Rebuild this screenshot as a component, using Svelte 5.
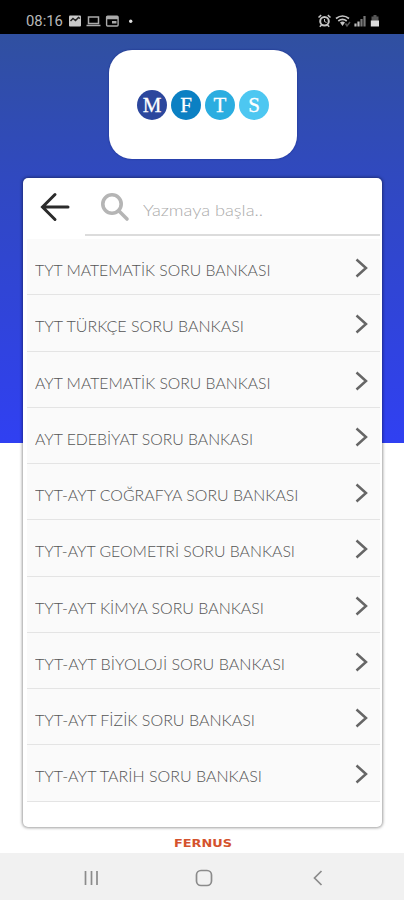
<script lang="ts">
  type Book = { title: string; width: number };

  const books: Book[] = [
    { title: 'TYT MATEMATİK SORU BANKASI', width: 235.5 },
    { title: 'TYT TÜRKÇE SORU BANKASI', width: 209 },
    { title: 'AYT MATEMATİK SORU BANKASI', width: 235.5 },
    { title: 'AYT EDEBİYAT SORU BANKASI', width: 218 },
    { title: 'TYT-AYT COĞRAFYA SORU BANKASI', width: 263.5 },
    { title: 'TYT-AYT GEOMETRİ SORU BANKASI', width: 260 },
    { title: 'TYT-AYT KİMYA SORU BANKASI', width: 229 },
    { title: 'TYT-AYT BİYOLOJİ SORU BANKASI', width: 250 },
    { title: 'TYT-AYT FİZİK SORU BANKASI', width: 220 },
    { title: 'TYT-AYT TARİH SORU BANKASI', width: 227 }
  ];

  const logo = [
    { letter: 'M', tone: 'navy' },
    { letter: 'F', tone: 'blue' },
    { letter: 'T', tone: 'sky' },
    { letter: 'S', tone: 'light' }
  ];
</script>

<div class="screen">
  <header class="status">
    <span class="clock">08:16</span>
    <svg class="notifications" width="68" height="14" viewBox="0 0 68 14">
      <rect x="2" y="1.500" width="12" height="11" rx="1" fill="#c9c9c9" />
      <path d="M3.500 7 6 4.500l2.500 2 3-3 1.500 1" fill="none" stroke="#222" stroke-width="1.500" />
      <path d="M21.500 3h10v6.500h-10zM19.500 11.500h14" fill="none" stroke="#aaa" stroke-width="1.500" />
      <rect x="39.600" y="2.200" width="11.500" height="9.800" rx="1" fill="none" stroke="#aaa" stroke-width="1.400" />
      <path d="M39.500 4h11.500M45 8.200h4.500" stroke="#aaa" stroke-width="2.400" />
      <circle cx="63.700" cy="7.200" r="1.700" fill="#ddd" />
    </svg>
    <svg class="signals" width="64" height="14" viewBox="0 0 64 14">
      <g fill="none" stroke="#c4c4c4">
        <circle cx="7.500" cy="7.200" r="4.300" stroke-width="2" />
        <path d="M1.500 3.500 4.200 1.200M13.500 3.500l-2.700-2.300M2.800 12.800l2-2M12.200 12.800l-2-2" stroke-width="1.600" />
        <path d="M7.500 5v2.500l2 1" stroke-width="1" />
        <path d="M19 4.500q6.500-5 13 0M21.300 7q4.200-3.200 8.400 0" stroke-width="1.700" />
      </g>
      <path d="m23 8.500 2.500 3.500L28 8.500q-2.500-1.800-5 0" fill="#c4c4c4" />
      <path d="m28.500 9.500 1.500 2.500 3-4" fill="none" stroke="#555" stroke-width="1.500" />
      <path d="M38.500 9.500v3M41.500 7.500v5" stroke="#bbb" stroke-width="2.200" />
      <path d="M44.500 5v7.500M47.500 2v10.500" stroke="#777" stroke-width="2.200" />
      <path d="M54.500 2.500h2V1h3v1.500h2V7h-7z" fill="#555" />
      <path d="M53.800 6.500H62v6h-8.200z" fill="#ddd" />
    </svg>
  </header>

  <main>
    <div class="logo">
      {#each logo as item}
        <span class="dot {item.tone}">{item.letter}</span>
      {/each}
    </div>

    <section class="panel">
      <div class="toolbar">
        <button class="back" aria-label="Geri">
          <svg width="30" height="30" viewBox="0 0 30 30">
            <path d="M28 15H3M15 2.500 2.500 15 15 27.500" />
          </svg>
        </button>
        <label class="search">
          <svg width="30" height="30" viewBox="0 0 30 30">
            <circle cx="12" cy="12" r="9.200" />
            <path d="m19 19 8 8" />
          </svg>
          <svg class="placeholder" width="125" height="24">
            <text x="0" y="18" textLength="120" lengthAdjust="spacingAndGlyphs">Yazmaya başla..</text>
          </svg>
        </label>
      </div>

      <ul>
        {#each books as book}
          <li>
            <svg class="title" width="300" height="24">
              <text x="0" y="18" textLength={book.width} lengthAdjust="spacingAndGlyphs">{book.title}</text>
            </svg>
            <svg class="chevron" width="13" height="20" viewBox="0 0 13 20">
              <path d="m1.500 1.500 9.500 8.500-9.500 8.500" />
            </svg>
          </li>
        {/each}
      </ul>
    </section>

    <footer>
      <svg width="60" height="12">
        <text x="1" y="9.500" textLength="58" lengthAdjust="spacingAndGlyphs">FERNUS</text>
      </svg>
    </footer>
  </main>

  <nav>
    <svg width="18" height="18" viewBox="0 0 18 18"><path d="M3.500 2v14M9.500 2v14M15 2v14" /></svg>
    <svg width="18" height="18" viewBox="0 0 18 18"><rect x="1.500" y="1.500" width="15" height="15" rx="4.500" /></svg>
    <svg width="18" height="18" viewBox="0 0 18 18"><path d="M12.500 2 5.500 9l7 7" /></svg>
  </nav>
</div>

<style>
  :global(body) {
    margin: 0;
    background: #fff;
  }
  .screen {
    display: flex;
    flex-direction: column;
    width: 404px;
    height: 900px;
    overflow: hidden;
    font-family: Lato, 'Open Sans', sans-serif;
  }
  svg {
    display: block;
    flex: none;
    fill: none;
  }

  .status {
    display: flex;
    align-items: center;
    height: 34px;
    padding: 8px 23px 0 26px;
    box-sizing: border-box;
    background: #000;
    flex: none;
  }
  .clock {
    width: 41px;
    font-family: Roboto, sans-serif;
    font-size: 14.8px;
    color: #b8b8b8;
  }
  .signals {
    margin-left: auto;
  }

  main {
    display: flex;
    flex-direction: column;
    align-items: center;
    flex: 1;
    min-height: 0;
    background: linear-gradient(#3050a0, #3048c4 40%, #3040f2) no-repeat 0 0 / 100% 409px;
  }
  .logo {
    display: flex;
    align-items: center;
    justify-content: center;
    gap: 4px;
    width: 188px;
    height: 109px;
    margin: 16px 0 0 2px;
    border-radius: 23px;
    background: #fff;
    box-shadow: 0 0 2px #182b87;
    flex: none;
  }
  .dot {
    width: 30px;
    height: 30px;
    border-radius: 50%;
    font: 21px/30px 'Liberation Serif', serif;
    text-align: center;
    color: #fff;
    -webkit-text-stroke: 0.3px #fff;
  }
  .navy {
    background: #2c479d;
  }
  .blue {
    background: #0b80c3;
  }
  .sky {
    background: #2bade0;
  }
  .light {
    background: #4dc7f1;
  }

  .panel {
    width: 359px;
    height: 649px;
    margin: 19px 0 0 1px;
    padding: 0 2px 0 4px;
    box-sizing: border-box;
    border-radius: 5px;
    background: #fff;
    box-shadow: 0 0 3px 1px rgba(0, 0, 0, 0.38);
    flex: none;
  }
  .toolbar {
    display: flex;
    height: 58px;
    padding-bottom: 3px;
  }
  .back {
    width: 58px;
    padding: 0 0 0 13px;
    border: 0;
    background: none;
  }
  .back path {
    stroke: #2b2b2b;
    stroke-width: 3;
    stroke-linecap: round;
  }
  .search {
    display: flex;
    align-items: center;
    gap: 13px;
    flex: 1;
    padding: 2px 0 0 15px;
    border-bottom: 2px solid #dcdcdc;
    box-sizing: border-box;
  }
  .search circle,
  .search path {
    stroke: #b5b5b5;
    stroke-width: 3.6;
    stroke-linecap: round;
  }
  .placeholder {
    margin-top: 5px;
  }
  .placeholder text {
    font-size: 16px;
    font-weight: 300;
    fill: #aaa;
  }

  ul {
    margin: 0;
    padding: 0;
    list-style: none;
  }
  li {
    display: flex;
    align-items: center;
    justify-content: space-between;
    height: 56.25px;
    padding: 3px 12px 0 8px;
    box-sizing: border-box;
    border-bottom: 1px solid #e4e4e4;
    background: #fafafa;
  }
  .title {
    margin-top: 4px;
  }
  .title text {
    font-size: 15.8px;
    font-weight: 300;
    fill: #555;
  }
  .chevron path {
    stroke: #666;
    stroke-width: 2.5;
  }

  footer {
    margin: 10px 0 0 1px;
  }
  footer text {
    font: bold 10.5px 'DejaVu Sans', sans-serif;
    fill: #d4522d;
  }

  nav {
    display: flex;
    align-items: center;
    justify-content: center;
    gap: 95.5px;
    height: 47px;
    padding: 3px 0 0 4px;
    box-sizing: border-box;
    background: #f1f1f1;
    flex: none;
  }
  nav svg {
    stroke: #8b8b8b;
    stroke-width: 1.7;
  }
</style>
